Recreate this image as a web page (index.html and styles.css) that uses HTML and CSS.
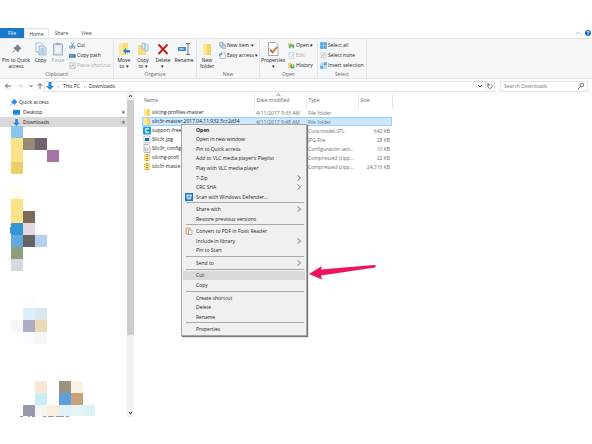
FILE: index.html
```html
<!DOCTYPE html>
<html lang="en">
<head>
<meta charset="utf-8">
<title>Downloads</title>
<link rel="stylesheet" href="styles.css">
</head>
<body>
<svg class="defs" aria-hidden="true">
  <symbol id="folder" viewBox="0 0 8 9"><path d="M1 1h6v7H1z" fill="#f5d36b"/><path d="M1 1h3v7H1z" fill="#ffe794"/></symbol>
  <symbol id="zip" viewBox="0 0 8 9"><path d="M1 1h6v7H1z" fill="#f8db7a"/><path d="M4 1v7" stroke="#8a7748" stroke-width="1.5" stroke-dasharray="1 1"/></symbol>
  <symbol id="down" viewBox="0 0 8 8"><path d="M2.500 0h3v4H8L4 8 0 4h2.500z" fill="#2b88d8"/></symbol>
  <symbol id="pin" viewBox="0 0 8 8"><path d="M4.500 0 8 3.500 6.500 4 5.500 6.500 1.500 3 4 2zM3 4.500.5 7.500" fill="currentColor" stroke="currentColor" stroke-width=".7"/></symbol>
  <symbol id="chev" viewBox="0 0 4 6"><path d="M.5.5 3.500 3 .5 5.500" fill="none" stroke="#444" stroke-width=".7"/></symbol>
  <symbol id="pages" viewBox="0 0 12 14"><path d="M1 1h5l2 2v7H1z" fill="#f5f9fd" stroke="#7893ad" stroke-width=".6"/><path d="M4 4h5l2 2v7H4z" fill="#d9eafa" stroke="#7893ad" stroke-width=".6"/><path d="M5.500 7h4M5.500 9h4M5.500 11h4" stroke="#5b9bd5" stroke-width=".7"/></symbol>
</svg>

<header class="tabs">
  <button class="tab file">File</button>
  <button class="tab home">Home</button>
  <button class="tab">Share</button>
  <button class="tab">View</button>
  <span class="tools">
    <svg width="6" height="4" viewBox="0 0 6 4"><path d="M1 3 3 1l2 2" fill="none" stroke="#999" stroke-width=".6"/></svg>
    <button class="help" aria-label="Help">?</button>
  </span>
</header>

<section class="ribbon">
  <div class="group clipboard">
    <div class="cmds">
      <button class="big w32"><svg class="pinicon" viewBox="0 0 8 8"><use href="#pin"/></svg><span>Pin to Quick<br>access</span></button>
      <button class="big w17"><svg><use href="#pages"/></svg>Copy</button>
      <button class="big w18 off"><svg viewBox="0 0 12 14"><path d="M1.500 2h9v11h-9z" fill="#c9dcf0" stroke="#8293a6"/><path d="M4 .8h4v2H4z" fill="#8293a6"/><path d="M3.500 4h5v7h-5z" fill="#edf4fb"/></svg>Paste</button>
      <div class="small">
        <button><svg viewBox="0 0 8 8"><path d="M2.500 5.500 6 .5M5 5.500 2.500.5" stroke="#666" stroke-width=".7"/><circle cx="2" cy="6" r="1.300" fill="none" stroke="#2b88d8"/><circle cx="5.500" cy="6" r="1.300" fill="none" stroke="#2b88d8"/></svg>Cut</button>
        <button><svg viewBox="0 0 8 8"><path d="M0 2.500h7.500v4H0z" fill="#356fa8"/><path d="M1 4.500h4" stroke="#fff" stroke-dasharray="1 .5"/></svg>Copy path</button>
        <button class="off"><svg viewBox="0 0 8 8"><path d="M1 1h6v6.500H1z" fill="#eee" stroke="#8fa3b6" stroke-width=".8"/><path d="M3 6V4h2M4 3l1.500 1L4 5" fill="none" stroke="#6a88a5" stroke-width=".7"/></svg>Paste shortcut</button>
      </div>
    </div>
    <p>Clipboard</p>
  </div>
  <div class="group organize">
    <div class="cmds">
      <button class="big w20"><svg viewBox="0 0 12 14"><path d="M1 1h9v12H1z" fill="#f8dc80"/><path d="M1 1h4v12H1z" fill="#ffe89c"/><path d="m5 9 3-3v2h4v2.500H8V12z" fill="#2b88d8"/></svg><span>Move<br>to ▾</span></button>
      <button class="big w18"><svg viewBox="0 0 12 14"><path d="M1 3h8v10H1z" fill="#f8dc80"/><path d="M5 1h3v6H5zM8 2h3v7H8z" fill="#dcecf9" stroke="#7ba4c8" stroke-width=".5"/></svg><span>Copy<br>to ▾</span></button>
      <button class="big w22"><svg viewBox="0 0 12 14"><path d="m1.500 2.500 9 9.500m0-9.500-9 9.500" stroke="#c5221f" stroke-width="2"/></svg><span>Delete<br>▾</span></button>
      <button class="big w20"><svg viewBox="0 0 12 14"><path d="M0 5h8v4H0z" fill="#3c8ad0"/><path d="M1.500 7h4" stroke="#fff"/><path d="M8 1.500h4M8 12.500h4M10 1.500v11" stroke="#555" stroke-width=".8"/></svg>Rename</button>
    </div>
    <p>Organize</p>
  </div>
  <div class="group new">
    <div class="cmds">
      <button class="big w20"><svg viewBox="0 0 12 14"><path d="M2 2h8v11H2z" fill="#f5d36b"/><path d="M2 2h4v11H2z" fill="#ffe794"/></svg><span>New<br>folder</span></button>
      <div class="small">
        <button><svg viewBox="0 0 8 8"><path d="M.5.5h4v4h-4zM2 2h4v4H2zM3.500 3.500h4v4h-4z" fill="#f4f9fe" stroke="#6f8ca8" stroke-width=".6"/></svg>New item ▾</button>
        <button><svg viewBox="0 0 8 8"><path d="M2 1h5v6.500H2z" fill="#fff" stroke="#7893ad" stroke-width=".6"/><path d="M.5 5V2.500h3M2.500 1.500l1 1-1 1" fill="none" stroke="#1769b0" stroke-width=".8"/></svg>Easy access ▾</button>
      </div>
    </div>
    <p>New</p>
  </div>
  <div class="group open">
    <div class="cmds">
      <button class="big w26"><svg viewBox="0 0 12 14"><path d="M1.500.5h7l2.500 2v11H1.500z" fill="#fff" stroke="#888" stroke-width=".7"/><path d="m3 7.500 2.500 3L10 5" fill="none" stroke="#d15a28" stroke-width="1.500"/></svg><span>Properties<br>▾</span></button>
      <div class="small">
        <button><svg viewBox="0 0 8 8"><path d="M0 1h3l1 1h3v2H0z" fill="#f3cf61"/><path d="M1 3h6v4H5V5H3v2H1z" fill="#55a884"/></svg>Open ▾</button>
        <button class="off"><svg viewBox="0 0 8 8"><path d="M1 .5h5.500v7H1z" fill="#fff" stroke="#8fa3b6" stroke-width=".6"/><path d="M3 6 7 2" stroke="#6fa3d8"/></svg>Edit</button>
        <button><svg viewBox="0 0 8 8"><path d="M0 1h4v6H0z" fill="#f5d36b"/><circle cx="5" cy="5" r="2.500" fill="#58a55c"/><path d="M5 3v2h1.500" fill="none" stroke="#fff" stroke-width=".7"/></svg>History</button>
      </div>
    </div>
    <p>Open</p>
  </div>
  <div class="group select">
    <div class="cmds">
      <div class="small">
        <button><svg viewBox="0 0 8 8"><path d="M.5.5h3v3h-3zM4.500.5h3v3h-3zM.5 4.500h3v3h-3zM4.500 4.500h3v3h-3z" fill="#67b7ec" stroke="#2b88d8" stroke-width=".6"/></svg>Select all</button>
        <button><svg viewBox="0 0 8 8"><path d="M1 1h2.500v2.500H1zM4.500 1H7v2.500H4.500zM1 4.500h2.500V7H1zM4.500 4.500H7V7H4.500z" fill="#fff" stroke="#aaa" stroke-width=".5"/></svg>Select none</button>
        <button><svg viewBox="0 0 8 8"><path d="M4.500.5h3v3h-3zM.5 4.500h3v3h-3z" fill="#67b7ec" stroke="#2b88d8" stroke-width=".5"/><path d="M1 1h2.500v2.500H1zM4.500 4.500h3v3h-3z" fill="#d9eefb" stroke="#75b5df" stroke-width=".5"/></svg>Invert selection</button>
      </div>
    </div>
    <p>Select</p>
  </div>
</section>

<nav class="address">
  <button aria-label="Back"><svg viewBox="0 0 8 8"><path d="M7 4H1.500M4 1.500 1.500 4 4 6.500" fill="none" stroke="#444" stroke-width=".8"/></svg></button>
  <button aria-label="Forward"><svg viewBox="0 0 8 8"><path d="M1 4h5.500M4 1.500 6.500 4 4 6.500" fill="none" stroke="#ccc" stroke-width=".8"/></svg></button>
  <button class="narrow" aria-label="Recent"><svg viewBox="0 0 8 8"><path d="m2.500 3 1.500 2 1.500-2" fill="none" stroke="#555" stroke-width=".8"/></svg></button>
  <button class="narrow" aria-label="Up"><svg viewBox="0 0 8 8"><path d="M4 7V1.500M1.500 4 4 1.500 6.500 4" fill="none" stroke="#444" stroke-width=".8"/></svg></button>
  <div class="path">
    <svg viewBox="0 0 8 8"><use href="#down"/></svg>
    <i>›</i><a href="#pc">This PC</a><i>›</i><a href="#downloads">Downloads</a>
    <button class="drop" aria-label="Previous locations"><svg viewBox="0 0 8 8"><path d="m2 3 2 2 2-2" fill="none" stroke="#444"/></svg></button>
    <button class="refresh" aria-label="Refresh"><svg viewBox="0 0 8 8"><path d="M2.500 2.500a2.200 2.200 0 1 0 3 0M2 .8v2.200h2" fill="none" stroke="#555" stroke-width=".8"/></svg></button>
  </div>
  <div class="search">
    <input type="text" placeholder="Search Downloads" aria-label="Search Downloads">
    <svg viewBox="0 0 8 8"><circle cx="4.800" cy="3" r="1.800" fill="none" stroke="#444" stroke-width=".7"/><path d="M3.500 4.500 1 7" stroke="#444" stroke-width=".8"/></svg>
  </div>
</nav>

<div class="content">
  <aside class="side">
    <div class="tree">
      <a class="quick" href="#quick"><svg viewBox="0 0 8 8"><use href="#pin"/></svg>Quick access</a>
      <a href="#desktop"><svg viewBox="0 0 8 8"><path d="M0 1h8v5.500H0z" fill="#1c8ae0"/><path d="M1 7h6" stroke="#8cc4f0"/></svg>Desktop<svg class="mark" viewBox="0 0 8 8"><use href="#pin"/></svg></a>
      <a class="current" href="#downloads"><svg viewBox="0 0 8 8"><use href="#down"/></svg>Downloads<svg class="mark" viewBox="0 0 8 8"><use href="#pin"/></svg></a>
      <svg class="mosaic" viewBox="0 0 84 291" shape-rendering="crispEdges" aria-hidden="true">
        <path fill="#89c6ed" d="M0 0h12v12H0z"/><path fill="#fee28a" d="M0 12h12v24H0zM0 73h12v24H0z"/>
        <path fill="#958b74" d="M12 12h12v12H12z"/><path fill="#73636a" d="M24 12h12v12H24z"/><path fill="#a373a4" d="M36 24h12v12H36z"/>
        <path fill="#ead06b" d="M0 36h12v12H0z"/><path fill="#fffcf0" d="M0 60h12v13H0z"/>
        <path fill="#7b6a5c" d="M12 85h12v12H12z"/><path fill="#3497d3" d="M-1 101h1v6h-1zM0 97h12v12H0z"/><path fill="#e3d8e3" d="M12 97h12v12H12z"/>
        <path fill="#62a9e2" d="M0 109h12v12H0z"/><path fill="#636464" d="M12 109h12v12H12z"/><path fill="#b4d0ee" d="M24 109h12v12H24z"/>
        <path fill="#8b9f7d" d="M0 121h12v12H0z"/><path fill="#d3dbe1" d="M0 133h12v12H0z"/><path fill="#fdfdfd" d="M12 170h12v12H12z"/>
        <path fill="#daeffb" d="M12 182h12v12H12z"/><path fill="#dee5ed" d="M24 182h12v12H24z"/>
        <path fill="#f7f7f7" d="M0 194h12v12H0z"/><path fill="#adacc7" d="M12 194h12v12H12z"/><path fill="#eadbb8" d="M24 194h12v12H24z"/>
        <path fill="#f7fbff" d="M12 206h12v12H12z"/><path fill="#f7f7f5" d="M24 206h12v12H24z"/>
        <path fill="#fbe5d5" d="M24 255h12v12H24z"/><path fill="#999382" d="M48 255h12v12H48z"/><path fill="#fdf3e2" d="M60 255h12v12H60z"/>
        <path fill="#c8edf3" d="M24 267h12v12H24z"/><path fill="#60a0da" d="M48 267h12v12H48z"/><path fill="#c8a27c" d="M60 267h12v12H60z"/>
        <path fill="#9699ad" d="M12 279h12v11H12z"/><path fill="#f5f5f2" d="M24 279h12v11H24z"/><path fill="#fbeedd" d="M36 279h12v11H36z"/><path fill="#e0f3fa" d="M48 279h12v11H48z"/><path fill="#e7f5f8" d="M60 279h12v11H60z"/><path fill="#dcf2f3" d="M72 279h12v11H72z"/>
        <path fill="#999" d="M9 290h3v1H9zM17 290h2v1h-2zM21 290h3v1h-3zM32 290h3v1h-3zM37 290h6v1h-6zM45 290h8v1h-8zM55 290h3v1h-3z"/>
      </svg>
    </div>
    <div class="scroll">
      <svg viewBox="0 0 7 8"><path d="m2 5 1.500-2L5 5" fill="none" stroke="#444"/></svg>
      <span class="thumb"></span>
      <svg viewBox="0 0 7 8"><path d="m2 3 1.500 2L5 3" fill="none" stroke="#444"/></svg>
    </div>
  </aside>

  <main class="files">
    <table>
      <colgroup><col class="c1"><col class="c2"><col class="c3"><col class="c4"></colgroup>
      <thead><tr><th>Name</th><th><span class="sort"></span>Date modified</th><th>Type</th><th>Size</th></tr></thead>
      <tbody>
        <tr><td><svg viewBox="0 0 8 9"><use href="#folder"/></svg>slicing-profiles-master</td><td>4/11/2017 9:33 AM</td><td>File folder</td><td></td></tr>
        <tr class="picked"><td><svg viewBox="0 0 8 9"><use href="#folder"/></svg>slic3r-master.2017.04.11.932.5cc2d34</td><td>4/11/2017 9:48 AM</td><td>File folder</td><td></td></tr>
        <tr><td><svg viewBox="0 0 8 9"><rect y=".5" width="8" height="8" rx="1" fill="#18a0dc"/><path d="M5.800 3a2 2 0 1 0 0 3" fill="none" stroke="#fff" stroke-width="1.300"/></svg>support-free</td><td></td><td>Cura.model.STL</td><td>642 KB</td></tr>
        <tr><td><svg viewBox="0 0 8 9"><path d="M1 1h6v7H1z" fill="#fff" stroke="#8b9cad" stroke-width=".6"/><path d="M2 3h4v3H2z" fill="#1769b0"/></svg>Slic3r.jpg</td><td></td><td>JPG File</td><td>28 KB</td></tr>
        <tr><td><svg viewBox="0 0 8 9"><path d="M1 .5h4.500L7 2v6.500H1z" fill="#fff" stroke="#888" stroke-width=".6"/><circle cx="3.500" cy="5.500" r="1.500" fill="none" stroke="#888" stroke-width=".8"/></svg>Slic3r_config</td><td></td><td>Configuration sett...</td><td>10 KB</td></tr>
        <tr><td><svg viewBox="0 0 8 9"><use href="#zip"/></svg>slicing-profi</td><td></td><td>Compressed (zipp...</td><td>22 KB</td></tr>
        <tr><td><svg viewBox="0 0 8 9"><use href="#zip"/></svg>slic3r-maste</td><td></td><td>Compressed (zipp...</td><td>24,316 KB</td></tr>
      </tbody>
    </table>
  </main>
</div>

<div class="menu" role="menu">
  <button class="bold">Open</button>
  <button>Open in new window</button>
  <button>Pin to Quick access</button>
  <button>Add to VLC media player's Playlist</button>
  <button>Play with VLC media player</button>
  <button>7-Zip<svg class="more"><use href="#chev"/></svg></button>
  <button>CRC SHA<svg class="more"><use href="#chev"/></svg></button>
  <button><svg class="ico" viewBox="0 0 8 8"><path d="M0 0h8v8H0z" fill="#1979ca"/><path d="M1.500 1.500h5v3C6.500 6 4 7 4 7S1.500 6 1.500 4.500z" fill="#fff"/><path d="M4 1v6M1 4h6" stroke="#1979ca" stroke-width=".8"/></svg>Scan with Windows Defender...</button>
  <hr>
  <button>Share with<svg class="more"><use href="#chev"/></svg></button>
  <button>Restore previous versions</button>
  <hr>
  <button><svg class="ico" viewBox="0 0 8 8"><path d="M1 1h4v6H1z" fill="#fce9d2" stroke="#c77e35" stroke-width=".7"/><path d="M3.500 3H7v4.500H3.500z" fill="#fff" stroke="#888" stroke-width=".6"/></svg>Convert to PDF in Foxit Reader</button>
  <button>Include in library<svg class="more"><use href="#chev"/></svg></button>
  <button>Pin to Start</button>
  <hr>
  <button>Send to<svg class="more"><use href="#chev"/></svg></button>
  <hr>
  <button class="hot">Cut</button>
  <button>Copy</button>
  <hr>
  <button>Create shortcut</button>
  <button>Delete</button>
  <button>Rename</button>
  <hr>
  <button>Properties</button>
</div>
<svg class="pointer" viewBox="0 0 68 16" aria-hidden="true"><path d="m0 10 13-8-1 3.500L65 1q3 0 1 2.500L12 11.500l1 4z" fill="#ee1260"/></svg>
</body>
</html>
```
FILE: styles.css
```css
* { box-sizing: border-box; }
body {
  margin: 0;
  background: #fff;
  color: #222;
  font: 5px/6px "Open Sans", "Noto Sans", sans-serif;
}
.defs { position: absolute; width: 0; height: 0; }
button, input {
  margin: 0;
  padding: 0;
  border: 0;
  background: none;
  color: inherit;
  font: inherit;
}
a { color: inherit; text-decoration: none; }
svg { flex: none; display: block; }

/* Ribbon tabs */
.tabs {
  display: flex;
  height: 38px;
  padding-top: 28px;
}
.tab { width: 25px; color: #444; }
.tab.file { width: 24px; background: #1979ca; color: #fff; }
.tab.home { border: 1px solid #e3e4e6; border-bottom: 0; background: #f9fafb; }
.tools {
  display: flex;
  align-items: center;
  gap: 4px;
  margin-left: auto;
  padding-right: 1px;
}
.help {
  width: 6px;
  height: 6px;
  border-radius: 50%;
  background: #1769b8;
  color: #fff;
  font-weight: 700;
}

/* Ribbon */
.ribbon {
  display: flex;
  height: 41px;
  border: solid #e1e2e4;
  border-width: 1px 0;
  background: #f5f6f7;
}
.group {
  display: flex;
  flex-direction: column;
  justify-content: space-between;
  border-right: 1px solid #e4e5e7;
}
.clipboard { width: 114px; }
.organize { width: 83px; }
.new { width: 63px; }
.open { width: 58px; }
.select { width: 49px; }
.group p { margin: 0 0 1px; text-align: center; color: #666; }
.cmds { display: flex; }
.big {
  display: flex;
  flex-direction: column;
  align-items: center;
  justify-content: flex-start;
  height: 31px;
  padding-top: 3px;
  white-space: nowrap;
}
.big svg { width: 12px; height: 14px; margin-bottom: 1px; }
.big .pinicon { width: 9px; color: #71808d; }
.w32 { width: 32px; }
.w26 { width: 26px; }
.w22 { width: 22px; }
.w20 { width: 20px; }
.w18 { width: 18px; }
.w17 { width: 17px; }
.off { color: #aaa; }
.off svg { opacity: .7; }
.small {
  display: flex;
  flex-direction: column;
  gap: 2px;
  padding: 2px 0 0 2px;
}
.small button {
  display: flex;
  align-items: center;
  gap: 1px;
  height: 8px;
  white-space: nowrap;
}
.small svg { width: 7px; height: 7px; }

/* Address bar */
.address {
  display: flex;
  align-items: center;
  height: 13px;
  padding: 1px 4px 0 2px;
}
.address svg { width: 8px; height: 8px; }
.address > button { width: 12px; }
.address > .narrow { width: 9px; }
.address > button svg { margin: auto; }
.path {
  display: flex;
  flex: 1;
  align-items: center;
  height: 11px;
  border: 1px solid #e3e3e3;
  padding-left: 1px;
}
.path i { width: 9px; text-align: center; font-style: normal; }
.path .drop { margin-left: auto; }
.path .refresh { border-left: 1px solid #e3e3e3; margin-left: 1px; }
.search {
  display: flex;
  align-items: center;
  width: 88px;
  height: 11px;
  margin-left: 5px;
  border: 1px solid #e3e3e3;
  padding: 0 2px 0 3px;
}
.search input { flex: 1; min-width: 0; }
.search input::placeholder { color: #777; }

/* Navigation pane */
.content { display: flex; }
.side { display: flex; width: 134px; height: 325px; }
.tree { flex: 1; padding-top: 5px; }
.tree a {
  display: flex;
  align-items: center;
  gap: 3px;
  height: 10px;
  padding: 0 2px 0 13px;
}
.tree a svg { width: 7px; height: 7px; color: #2b88d8; }
.tree a.quick { gap: 2px; padding-left: 10px; }
.tree a.current { background: #d9d9d9; }
.tree a .mark { width: 4px; margin-left: auto; color: #777; }
.mosaic {
  width: 84px;
  height: 291px;
  margin: -1px 0 0 11px;
  overflow: visible;
}
.scroll {
  display: flex;
  flex-direction: column;
  justify-content: space-between;
  width: 7px;
  background: #f0f0f0;
}
.scroll svg { width: 7px; height: 8px; }
.thumb { height: 235px; margin-bottom: auto; background: #cdcdcd; }

/* File list */
.files { flex: 1; padding: 2px 0 0 8px; }
table {
  width: 250px;
  table-layout: fixed;
  border-collapse: collapse;
}
.c1 { width: 112px; }
.c2, .c3 { width: 52px; }
.c4 { width: 34px; }
th, td {
  padding: 0 0 0 2px;
  text-align: left;
  white-space: nowrap;
  font-weight: 400;
}
th {
  position: relative;
  height: 14px;
  border-right: 1px solid #e5e5e5;
  padding-bottom: 3px;
  color: #5b6470;
}
.sort {
  position: absolute;
  top: 0;
  left: 22px;
  width: 3px;
  height: 3px;
  border: solid #999;
  border-width: 1px 0 0 1px;
  transform: rotate(45deg);
}
td { height: 9px; color: #6d6d6d; }
td:first-child { padding-left: 1px; color: #222; }
td:last-child { padding-right: 2px; text-align: right; }
td svg {
  display: inline-block;
  width: 8px;
  height: 9px;
  margin-right: 1px;
  vertical-align: middle;
}
.picked { background: #cce8ff; outline: 1px solid #99d1ff; outline-offset: -1px; }

/* Context menu */
.menu {
  position: absolute;
  top: 124px;
  left: 181px;
  display: flex;
  flex-direction: column;
  width: 126px;
  height: 212px;
  border: 1px solid #a5a5a5;
  padding: 0 1px 1px;
  background: #f0f0f0;
  box-shadow: 1px 1px 1px #777;
}
.menu button {
  display: flex;
  flex: 1;
  align-items: center;
  position: relative;
  padding: 0 4px 0 13px;
  text-align: left;
}
.menu .bold { font-weight: 700; }
.menu .hot { background: #d9d9d9; }
.menu hr {
  flex: none;
  width: 118px;
  height: 1px;
  margin: 1px 3px;
  border: 0;
  background: #a9a9a9;
}
.ico { position: absolute; left: 2px; width: 8px; height: 8px; }
.more { width: 4px; height: 6px; margin-left: auto; }

.pointer {
  position: absolute;
  top: 264px;
  left: 309px;
  width: 68px;
  height: 16px;
}
```
